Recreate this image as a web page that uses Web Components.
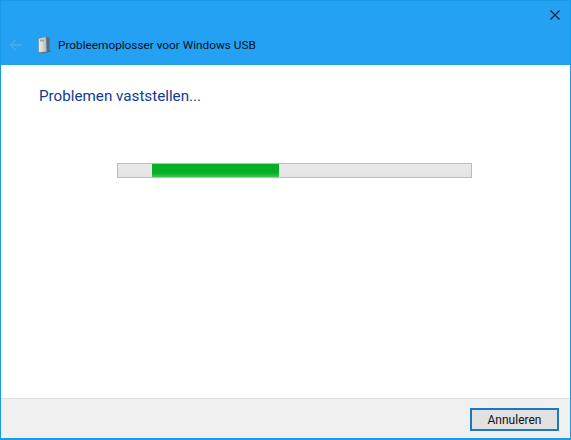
<!DOCTYPE html>
<html>
<head>
<meta charset="utf-8">
<title>Probleemoplosser voor Windows USB</title>
<style>
html, body { margin: 0; height: 100%; }
body { font-family: Roboto, "Open Sans", "Liberation Sans", sans-serif; }
</style>
</head>
<body>
<wizard-window>
  <wizard-titlebar slot="title">Probleemoplosser voor Windows USB</wizard-titlebar>
  <wizard-page heading="Problemen vaststellen...">
    <marquee-bar></marquee-bar>
  </wizard-page>
  <wizard-footer slot="footer">
    <wizard-button>Annuleren</wizard-button>
  </wizard-footer>
</wizard-window>

<script>
// venster: rand + titel, inhoud, voet
class WizardWindow extends HTMLElement {
  constructor() {
    super();
    this.attachShadow({ mode: 'open' }).innerHTML = `
      <style>
        :host { display: flex; flex-direction: column; box-sizing: border-box; width: 571px; height: 440px;
                background: #fff; border: 1px solid #1a9be9; border-bottom-width: 2px; overflow: hidden; }
        main { flex: 1; display: flex; min-height: 0; }
      </style>
      <slot name="title"></slot>
      <main><slot></slot></main>
      <slot name="footer"></slot>
    `;
  }
}

class WizardTitlebar extends HTMLElement {
  constructor() {
    super();
    this.attachShadow({ mode: 'open' }).innerHTML = `
      <style>
        :host { display: flex; flex-direction: column; height: 64px; background: #25a1f4; color: #04101c;
                font-size: 11.8px; flex: none; }
        .top { display: flex; justify-content: flex-end; height: 31px; }
        .close { width: 10px; height: 10px; margin: 9px 10px 0 0; }
        .row { display: flex; align-items: center; height: 26px; }
        .back { width: 13px; height: 12px; margin-left: 8px; }
        .doc { width: 15px; height: 18px; margin-left: 15px; margin-right: 6px; }
      </style>
      <div class="top">
        <svg class="close" viewBox="0 0 10 10" fill="none" stroke="#14202c" stroke-width="1.1">
          <path d="M.5.5l9 9M9.500.5l-9 9"/>
        </svg>
      </div>
      <div class="row">
        <svg class="back" viewBox="0 0 13 12" fill="none" stroke="#4fa9e6" stroke-width="1.3">
          <path d="M13 6H1.500M6.500 1l-5 5 5 5"/>
        </svg>
        <svg class="doc" viewBox="0 0 15 18">
          <defs>
            <linearGradient id="g" x1="0" x2="1" y1="0" y2="0">
              <stop offset="0" stop-color="#eef0f1"/><stop offset=".6" stop-color="#ccd2d5"/><stop offset="1" stop-color="#a4acb1"/>
            </linearGradient>
          </defs>
          <path d="M1 16.500l5 1.200 8.500-2.200-1.500-1z" fill="#2f6c99" opacity=".8"/>
          <path d="M1.500 2.500l8-2 .5 15.500-8.500 .5z" fill="url(#g)" stroke="#66727a" stroke-width=".5"/>
          <path d="M9.500 .5l3 1.300V15l-2.500 1z" fill="#5e696f"/>
          <rect x="3" y="3.500" width="4" height="2" fill="#9aa4a9"/>
        </svg>
        <span><slot></slot></span>
      </div>
    `;
  }
}

class WizardPage extends HTMLElement {
  constructor() {
    super();
    this.attachShadow({ mode: 'open' }).innerHTML = `
      <style>
        :host { display: flex; flex-direction: column; flex: 1; padding: 21px 38px 0; }
        h1 { margin: 0; font-weight: 400; font-size: 15.2px; line-height: 20px; color: #0f3a96; }
        .body { display: flex; margin: 57px 0 0 78px; }
      </style>
      <h1></h1>
      <div class="body"><slot></slot></div>
    `;
    this.shadowRoot.querySelector('h1').textContent = this.getAttribute('heading');
  }
}

class MarqueeBar extends HTMLElement {
  constructor() {
    super();
    this.attachShadow({ mode: 'open' }).innerHTML = `
      <style>
        :host { display: block; box-sizing: border-box; width: 355px; height: 15px;
                border: 1px solid #bcbcbc; background: linear-gradient(#e8e8e8, #e4e4e4); overflow: hidden; }
        .chunk { width: 127px; height: 100%; margin-left: 34px;
                 background: linear-gradient(#06b025 0, #06b025 70%, #3fc45a 100%); }
      </style>
      <div class="chunk"></div>
    `;
  }
}

class WizardFooter extends HTMLElement {
  constructor() {
    super();
    this.attachShadow({ mode: 'open' }).innerHTML = `
      <style>
        :host { display: flex; justify-content: flex-end; align-items: flex-start; box-sizing: border-box; flex: none;
                height: 40px; padding: 9px 11px 0 0; background: #f0f0f0; border-top: 1px solid #dfdfdf; }
      </style>
      <slot></slot>
    `;
  }
}

class WizardButton extends HTMLElement {
  constructor() {
    super();
    this.attachShadow({ mode: 'open' }).innerHTML = `
      <style>
        :host { display: block; }
        button { box-sizing: border-box; width: 89px; height: 23px; padding: 0; display: block;
                 font: 12px Roboto, "Open Sans", sans-serif; color: #111;
                 background: #e1e1e1; border: 2px solid #1a78c2; }
      </style>
      <button><slot></slot></button>
    `;
  }
}

customElements.define('wizard-window', WizardWindow);
customElements.define('wizard-titlebar', WizardTitlebar);
customElements.define('wizard-page', WizardPage);
customElements.define('marquee-bar', MarqueeBar);
customElements.define('wizard-footer', WizardFooter);
customElements.define('wizard-button', WizardButton);
</script>
</body>
</html>
